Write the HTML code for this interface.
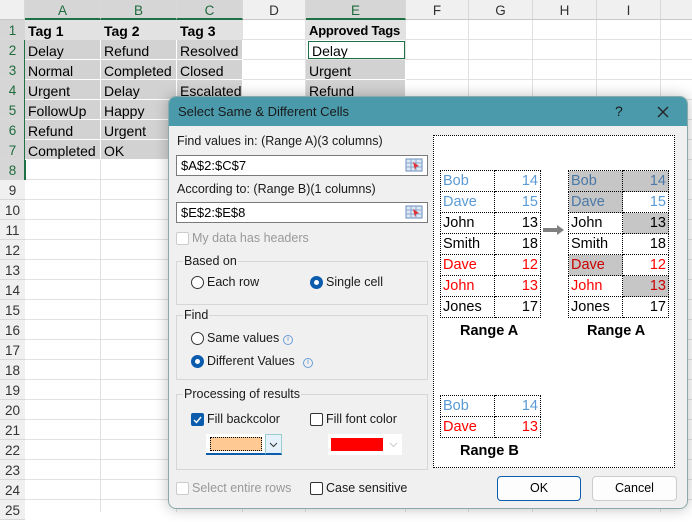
<!DOCTYPE html>
<html><head><meta charset="utf-8"><style>
*{box-sizing:border-box;margin:0;padding:0}
body{width:692px;height:512px;overflow:hidden;background:#fff;font-family:"Liberation Sans",sans-serif;position:relative;font-size:13px;color:#000}
.a{position:absolute}
.ch{position:absolute;top:0;height:20px;background:#f0f0f0;border-right:1px solid #d8d8d8;border-bottom:1px solid #c8c8c8;text-align:center;line-height:21px;font-size:13.5px;color:#333}
.ch.s{background:#d6d6d6;color:#1e6b3c;border-bottom:2px solid #1e7145}
.rh{position:absolute;left:0;width:25px;height:20px;background:#f0f0f0;border-bottom:1px solid #d8d8d8;text-align:center;line-height:22px;font-size:13.5px;color:#333}
.rh.s{background:#d6d6d6;color:#1e6b3c}
.c{position:absolute;height:20px;line-height:22px;font-size:14px;padding-left:3px;border-right:1px solid #e2e2e2;border-bottom:1px solid #e2e2e2;white-space:nowrap;overflow:hidden}
.g{background:#d2d2d2;border-color:#fff}
.h{background:#e2e2e2;font-weight:bold;border-color:#e2e2e2}
.lbl{position:absolute;font-size:12.5px;color:#1a1a1a;white-space:nowrap}
.inp{position:absolute;background:#fff;border:1px solid #7a7a7a;height:21px;font-size:13px;line-height:19px;padding-left:4px}
.grp{position:absolute;border:1px solid #d6d6d6}
.rad{position:absolute;width:13px;height:13px;border:1px solid #333;border-radius:50%;background:#fff}
.rad.on{border:4px solid #0b5cad}
.chk{position:absolute;width:13px;height:13px;border:1px solid #333;border-radius:2px;background:#fff}
.info{position:absolute;width:10px;height:10px;border:1px solid #6a9fd8;border-radius:50%;font-size:7px;line-height:8px;text-align:center;color:#4a86c8}
table.t{position:absolute;border-collapse:collapse;font-size:14.5px}
table.t td{border:1px dotted #000;height:21px;padding:0 2px;line-height:20px}
table.t td:first-child{width:54px}
table.t td:last-child{width:46px;text-align:right}
.bl{color:#5b9bd5}.rd{color:#f00}
.gy{background:#c6c6c6}
.cap{position:absolute;font-weight:bold;font-size:14.5px}
</style></head><body>
<div class="ch" style="left:0;width:25px;background:#f0f0f0"></div>
<div class="ch s" style="left:25px;width:76px">A</div>
<div class="ch s" style="left:101px;width:76px">B</div>
<div class="ch s" style="left:177px;width:66px">C</div>
<div class="ch" style="left:243px;width:63px">D</div>
<div class="ch s" style="left:306px;width:100px">E</div>
<div class="ch" style="left:406px;width:63px">F</div>
<div class="ch" style="left:469px;width:64px">G</div>
<div class="ch" style="left:533px;width:64px">H</div>
<div class="ch" style="left:597px;width:64px">I</div>
<div class="ch" style="left:661px;width:40px"></div>
<svg class="a" style="left:25px;top:20px" width="667" height="492">
<g stroke="#e1e1e1" stroke-width="1">
<line x1="75.5" y1="0" x2="75.5" y2="492"/><line x1="151.5" y1="0" x2="151.5" y2="492"/><line x1="217.5" y1="0" x2="217.5" y2="492"/><line x1="280.5" y1="0" x2="280.5" y2="492"/><line x1="380.5" y1="0" x2="380.5" y2="492"/><line x1="443.5" y1="0" x2="443.5" y2="492"/><line x1="507.5" y1="0" x2="507.5" y2="492"/><line x1="571.5" y1="0" x2="571.5" y2="492"/><line x1="635.5" y1="0" x2="635.5" y2="492"/>
<line x1="0" y1="19.5" x2="667" y2="19.5"/><line x1="0" y1="39.5" x2="667" y2="39.5"/><line x1="0" y1="59.5" x2="667" y2="59.5"/><line x1="0" y1="79.5" x2="667" y2="79.5"/><line x1="0" y1="99.5" x2="667" y2="99.5"/><line x1="0" y1="119.5" x2="667" y2="119.5"/><line x1="0" y1="139.5" x2="667" y2="139.5"/><line x1="0" y1="159.5" x2="667" y2="159.5"/><line x1="0" y1="179.5" x2="667" y2="179.5"/><line x1="0" y1="199.5" x2="667" y2="199.5"/><line x1="0" y1="219.5" x2="667" y2="219.5"/><line x1="0" y1="239.5" x2="667" y2="239.5"/><line x1="0" y1="259.5" x2="667" y2="259.5"/><line x1="0" y1="279.5" x2="667" y2="279.5"/><line x1="0" y1="299.5" x2="667" y2="299.5"/><line x1="0" y1="319.5" x2="667" y2="319.5"/><line x1="0" y1="339.5" x2="667" y2="339.5"/><line x1="0" y1="359.5" x2="667" y2="359.5"/><line x1="0" y1="379.5" x2="667" y2="379.5"/><line x1="0" y1="399.5" x2="667" y2="399.5"/><line x1="0" y1="419.5" x2="667" y2="419.5"/><line x1="0" y1="439.5" x2="667" y2="439.5"/><line x1="0" y1="459.5" x2="667" y2="459.5"/><line x1="0" y1="479.5" x2="667" y2="479.5"/>
</g></svg>
<div class="rh s" style="top:20px">1</div><div class="rh s" style="top:40px">2</div><div class="rh s" style="top:60px">3</div><div class="rh s" style="top:80px">4</div><div class="rh s" style="top:100px">5</div><div class="rh s" style="top:120px">6</div><div class="rh s" style="top:140px">7</div><div class="rh s" style="top:160px">8</div><div class="rh" style="top:180px">9</div><div class="rh" style="top:200px">10</div><div class="rh" style="top:220px">11</div><div class="rh" style="top:240px">12</div><div class="rh" style="top:260px">13</div><div class="rh" style="top:280px">14</div><div class="rh" style="top:300px">15</div><div class="rh" style="top:320px">16</div><div class="rh" style="top:340px">17</div><div class="rh" style="top:360px">18</div><div class="rh" style="top:380px">19</div><div class="rh" style="top:400px">20</div><div class="rh" style="top:420px">21</div><div class="rh" style="top:440px">22</div><div class="rh" style="top:460px">23</div><div class="rh" style="top:480px">24</div><div class="rh" style="top:500px">25</div>
<div class="a" style="left:24px;top:40px;width:2px;height:140px;background:#1e7145"></div>
<div class="c h" style="left:25px;top:20px;width:76px">Tag 1</div><div class="c h" style="left:101px;top:20px;width:76px">Tag 2</div><div class="c h" style="left:177px;top:20px;width:66px">Tag 3</div>
<div class="c g" style="left:25px;top:40px;width:76px">Delay</div><div class="c g" style="left:101px;top:40px;width:76px">Refund</div><div class="c g" style="left:177px;top:40px;width:66px">Resolved</div>
<div class="c g" style="left:25px;top:60px;width:76px">Normal</div><div class="c g" style="left:101px;top:60px;width:76px">Completed</div><div class="c g" style="left:177px;top:60px;width:66px">Closed</div>
<div class="c g" style="left:25px;top:80px;width:76px">Urgent</div><div class="c g" style="left:101px;top:80px;width:76px">Delay</div><div class="c g" style="left:177px;top:80px;width:66px">Escalated</div>
<div class="c g" style="left:25px;top:100px;width:76px">FollowUp</div><div class="c g" style="left:101px;top:100px;width:76px">Happy</div><div class="c g" style="left:177px;top:100px;width:66px"></div>
<div class="c g" style="left:25px;top:120px;width:76px">Refund</div><div class="c g" style="left:101px;top:120px;width:76px">Urgent</div><div class="c g" style="left:177px;top:120px;width:66px"></div>
<div class="c g" style="left:25px;top:140px;width:76px">Completed</div><div class="c g" style="left:101px;top:140px;width:76px">OK</div><div class="c g" style="left:177px;top:140px;width:66px"></div>
<div class="c h" style="left:306px;top:20px;width:100px;font-size:13px;letter-spacing:-0.2px">Approved Tags</div>
<div class="c" style="left:308px;top:41px;width:97px;height:18px;line-height:19px;border:1px solid #1e7145;background:#fff">Delay</div>
<div class="c g" style="left:306px;top:60px;width:100px">Urgent</div>
<div class="c g" style="left:306px;top:80px;width:100px">Refund</div>
<div class="a" style="left:168px;top:96px;width:520px;height:413px;background:#f0f0f0;border:1px solid #8aa;border-radius:8px;box-shadow:0 0 14px rgba(0,0,0,.25);overflow:hidden">
 <div class="a" style="left:0;top:0;width:520px;height:29px;background:#4a9aac"></div>
 <div class="lbl" style="left:9px;top:7px;font-size:13px">Select Same &amp; Different Cells</div>
 <div class="lbl" style="left:446px;top:6px;font-size:14px">?</div>
 <svg class="a" style="left:488px;top:9px" width="12" height="12"><path d="M1 1L11 11M11 1L1 11" stroke="#222" stroke-width="1.3"/></svg>
</div>
<div class="lbl" style="left:177px;top:134px">Find values in: (Range A)(3 columns)</div>
<div class="inp" style="left:176px;top:155px;width:252px">$A$2:$C$7</div>
<div class="lbl" style="left:177px;top:182px">According to: (Range B)(1 columns)</div>
<div class="inp" style="left:176px;top:202px;width:252px">$E$2:$E$8</div>
<svg class="a" style="left:405px;top:158px" width="18" height="15"><rect x="1" y="1" width="16" height="12" fill="#dde8f5" stroke="#6b8fbf"/><path d="M1 5H17M1 9H17M6 1V13M11 1V13" stroke="#8aa8d0"/><path d="M8 4L14 8L11 9L10 12Z" fill="#d33"/></svg>
<svg class="a" style="left:405px;top:205px" width="18" height="15"><rect x="1" y="1" width="16" height="12" fill="#dde8f5" stroke="#6b8fbf"/><path d="M1 5H17M1 9H17M6 1V13M11 1V13" stroke="#8aa8d0"/><path d="M8 4L14 8L11 9L10 12Z" fill="#d33"/></svg>
<div class="chk" style="left:176px;top:232px;border-color:#ccc"></div>
<div class="lbl" style="left:192px;top:231px;color:#999">My data has headers</div>
<div class="grp" style="left:176px;top:261px;width:252px;height:44px"></div>
<div class="lbl" style="left:183px;top:254px;background:#f0f0f0;padding:0 1px">Based on</div>
<div class="rad" style="left:191px;top:276px"></div><div class="lbl" style="left:207px;top:275px">Each row</div>
<div class="rad on" style="left:310px;top:276px"></div><div class="lbl" style="left:326px;top:275px">Single cell</div>
<div class="grp" style="left:176px;top:315px;width:252px;height:65px"></div>
<div class="lbl" style="left:183px;top:308px;background:#f0f0f0;padding:0 1px">Find</div>
<div class="rad" style="left:191px;top:332px"></div><div class="lbl" style="left:207px;top:331px">Same values</div><div class="info" style="left:283px;top:335px">i</div>
<div class="rad on" style="left:191px;top:355px"></div><div class="lbl" style="left:207px;top:354px">Different Values</div><div class="info" style="left:303px;top:358px">i</div>
<div class="grp" style="left:176px;top:394px;width:252px;height:76px"></div>
<div class="lbl" style="left:183px;top:387px;background:#f0f0f0;padding:0 1px">Processing of results</div>
<div class="chk" style="left:191px;top:413px;background:#0b5cad;border-color:#0b5cad"><svg width="11" height="11" style="position:absolute;left:0;top:0"><path d="M2 6L4.5 8.5L9 3" stroke="#fff" stroke-width="1.4" fill="none"/></svg></div>
<div class="lbl" style="left:207px;top:412px">Fill backcolor</div>
<div class="chk" style="left:310px;top:413px"></div><div class="lbl" style="left:326px;top:412px">Fill font color</div>
<div class="a" style="left:206px;top:434px;width:60px;height:21px;background:#fff;border-bottom:2px solid #0b5cad"><div class="a" style="left:4px;top:3px;width:52px;height:14px;background:#ffc994;border:1px dotted #000"></div></div>
<div class="a" style="left:265px;top:434px;width:17px;height:21px;background:#e5f1fb;border:1px solid #9cc;border-bottom:2px solid #0b5cad"><svg width="15" height="15" style="position:absolute;left:0;top:2px"><path d="M4 6L7.5 9.5L11 6" stroke="#333" fill="none"/></svg></div>
<div class="a" style="left:328px;top:434px;width:58px;height:21px;background:#fff"><div class="a" style="left:3px;top:4px;width:52px;height:13px;background:#f00"></div></div>
<div class="a" style="left:386px;top:434px;width:16px;height:21px;background:#fff"><svg width="15" height="15" style="position:absolute;left:0;top:3px"><path d="M4 6L7.5 9.5L11 6" stroke="#ccc" fill="none"/></svg></div>
<div class="chk" style="left:176px;top:482px;border-color:#ccc"></div>
<div class="lbl" style="left:192px;top:481px;color:#999">Select entire rows</div>
<div class="chk" style="left:310px;top:482px"></div><div class="lbl" style="left:326px;top:481px">Case sensitive</div>
<div class="a" style="left:497px;top:476px;width:84px;height:25px;border:1px solid #0b5cad;border-radius:4px;background:#fdfdfd;text-align:center;line-height:23px;font-size:12.5px">OK</div>
<div class="a" style="left:592px;top:476px;width:85px;height:25px;border:1px solid #ccc;border-radius:4px;background:#fdfdfd;text-align:center;line-height:23px;font-size:12.5px">Cancel</div>
<div class="a" style="left:433px;top:135px;width:242px;height:333px;background:#fff;border:1px dotted #000"></div>
<table class="t" style="left:440px;top:170px"><tr class="bl"><td>Bob</td><td>14</td></tr><tr class="bl"><td>Dave</td><td>15</td></tr><tr><td>John</td><td>13</td></tr><tr><td>Smith</td><td>18</td></tr><tr class="rd"><td>Dave</td><td>12</td></tr><tr class="rd"><td>John</td><td>13</td></tr><tr><td>Jones</td><td>17</td></tr></table>
<table class="t" style="left:568px;top:170px"><tr class="bl"><td class="gy" style="color:#4a79a8">Bob</td><td class="gy" style="color:#4a79a8">14</td></tr><tr class="bl"><td class="gy" style="color:#4a79a8">Dave</td><td>15</td></tr><tr><td>John</td><td class="gy">13</td></tr><tr><td>Smith</td><td>18</td></tr><tr class="rd"><td class="gy" style="color:#c00">Dave</td><td>12</td></tr><tr class="rd"><td>John</td><td class="gy" style="color:#c00">13</td></tr><tr><td>Jones</td><td>17</td></tr></table>
<svg class="a" style="left:543px;top:224px" width="22" height="12"><path d="M0 4H14V1L21 6L14 11V8H0Z" fill="#808080"/></svg>
<div class="cap" style="left:460px;top:323px">Range A</div>
<div class="cap" style="left:587px;top:323px">Range A</div>
<table class="t" style="left:440px;top:395px"><tr class="bl"><td>Bob</td><td>14</td></tr><tr class="rd"><td>Dave</td><td>13</td></tr></table>
<div class="cap" style="left:460px;top:443px">Range B</div>
</body></html>
